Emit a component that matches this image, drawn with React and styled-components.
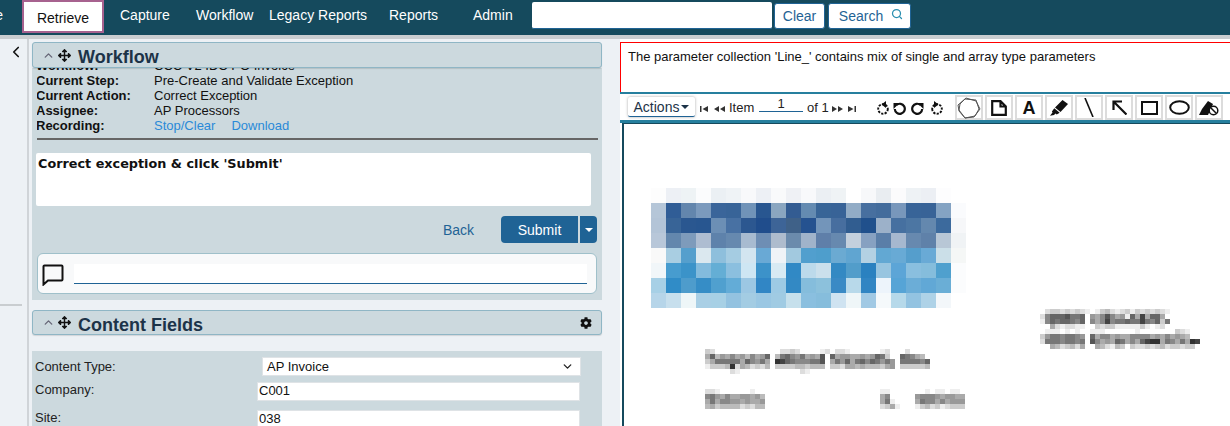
import React from "react";
import styled, { createGlobalStyle } from "styled-components";
import { FaArrowsAlt, FaCog } from "react-icons/fa";
import { Search as SearchIcon, ChevronLeft, ChevronUp, ChevronDown } from "lucide-react";

const GlobalStyle = createGlobalStyle`
  html, body { margin: 0; padding: 0; background: #fff; }
  body { font-family: "Liberation Sans", Arial, sans-serif; font-size: 13px; color: #111; }
  * { box-sizing: border-box; }
`;

const Page = styled.div`
  width: 1230px;
  height: 426px;
  overflow: hidden;
  display: flex;
  flex-direction: column;
`;

const Nav = styled.div`
  height: 35px;
  flex: none;
  background: #154a5d;
  display: flex;
  align-items: flex-start;
  overflow: hidden;
`;

const NavItem = styled.a`
  flex: none;
  width: ${(p) => p.$w}px;
  padding-top: 7px;
  color: #fff;
  font-size: 14px;
  line-height: 16px;
  white-space: nowrap;
`;

const NavClip = styled.div`
  width: 3px;
  overflow: hidden;
  flex: none;
  direction: rtl;
  padding-top: 7px;
  color: #fff;
  font-size: 14px;
  line-height: 16px;
`;

const ActiveTab = styled.a`
  flex: none;
  width: 82px;
  height: 33px;
  margin-left: 19px;
  margin-right: 16px;
  background: #fff;
  border: 2px solid #a7628f;
  color: #111;
  font-size: 14px;
  line-height: 16px;
  text-align: center;
  padding-top: 8px;
`;

const SearchInput = styled.div`
  width: 240px;
  height: 27px;
  margin: 2px 2px 0 20px;
  background: #fff;
  border-bottom: 1px solid #1f6395;
  border-radius: 2px;
  flex: none;
`;

const NavButton = styled.button`
  flex: none;
  width: ${(p) => p.$w}px;
  height: 26px;
  margin: 3px 3px 0 0;
  padding: 0;
  background: #fff;
  border: 1px solid #1f6395;
  border-radius: 3px;
  color: #1f6395;
  font: 14px "Liberation Sans", Arial, sans-serif;
  display: flex;
  align-items: center;
  justify-content: center;
  gap: 8px;
`;

const SearchGlyph = styled(SearchIcon)`
  margin-top: -4px;
  margin-right: -3px;
`;

const Strip = styled.div`
  height: 4px;
  flex: none;
  background: #c9cdd0;
`;

const Main = styled.div`
  flex: 1;
  display: flex;
  min-height: 0;
`;

const Sidebar = styled.div`
  width: 29px;
  flex: none;
  background: #edf1f5;
  border-right: 2px solid #d0d4d8;
  display: flex;
  flex-direction: column;
  color: #111;
`;

const Collapse = styled.div`
  height: 265px;
  flex: none;
  padding: 4px 0 0 7px;
`;

const SideRule = styled.div`
  width: 22px;
  height: 2px;
  background: #c9cdd0;
`;

const LeftPane = styled.div`
  width: 591px;
  flex: none;
  background: #edf1f5;
  padding: 3px 18px 0 3px;
  overflow: hidden;
`;

const PanelHeader = styled.div`
  position: relative;
  z-index: 1;
  height: ${(p) => p.$h}px;
  background: #ccd9de;
  border: 1px solid #8fb6c5;
  border-radius: 3px;
  box-shadow: 0 1px 1px rgba(0, 0, 0, 0.12);
  display: flex;
  align-items: center;
  padding: 0 9px;
  color: #1c3348;
`;

const HeaderTitle = styled.h2`
  margin: ${(p) => p.$mt}px 0 0 7px;
  font-size: 18px;
  line-height: 22px;
  font-weight: bold;
  flex: 1;
`;

const Move = styled(FaArrowsAlt)`
  margin-left: 3px;
  color: #111;
`;

const PanelBody = styled.div`
  background: #ccd9de;
  height: ${(p) => p.$h}px;
  margin-top: ${(p) => p.$mt || 0}px;
  padding: ${(p) => p.$pad};
  overflow: hidden;
`;

const Info = styled.div`
  height: 72px;
  overflow: hidden;
  border-bottom: 2px solid #666;
  margin: 0 4px 0 5px;
`;

const InfoRows = styled.div`
  margin-top: -10px;
`;

const InfoRow = styled.div`
  display: grid;
  grid-template-columns: 117px 1fr;
  height: 15px;
  line-height: 15px;
  font-size: 13px;
  color: #111;
`;

const InfoLabel = styled.span`
  font-weight: bold;
  margin-left: -1px;
`;

const RecLink = styled.a`
  color: #2a8ad8;
  margin-right: 16px;
`;

const Instruction = styled.div`
  height: 53px;
  margin: 13px 11px 0 4px;
  background: #fff;
  padding: 3px 2px;
  font: bold 12.800px/16px "DejaVu Sans", Verdana, sans-serif;
  color: #111;
  border-radius: 2px;
`;

const Actions = styled.div`
  display: flex;
  justify-content: flex-end;
  align-items: center;
  margin: 10px 5px 0 0;
  height: 27px;
`;

const BackLink = styled.a`
  color: #1f6395;
  font-size: 14px;
  margin-right: 27px;
  padding-top: 1px;
`;

const SubmitButton = styled.button`
  width: 77px;
  height: 27px;
  padding: 0;
  background: #1f6395;
  color: #fff;
  border: 0;
  border-radius: 4px 0 0 4px;
  font: 14px "Liberation Sans", Arial, sans-serif;
`;

const CaretButton = styled.button`
  width: 17px;
  height: 27px;
  margin-left: 2px;
  padding: 0;
  background: #1f6395;
  border: 0;
  border-radius: 0 4px 4px 0;
  display: flex;
  align-items: center;
  justify-content: center;
`;

const Caret = styled.i`
  width: 0;
  height: 0;
  border-left: 4px solid transparent;
  border-right: 4px solid transparent;
  border-top: 4px solid ${(p) => p.$c || "#fff"};
  margin-top: 1px;
`;

const CommentBox = styled.div`
  height: 41px;
  margin: 10px 5px 0 5px;
  background: #f8f9fa;
  border: 1px solid #9fc0ca;
  border-radius: 6px;
  padding: 10px 9px 0 4px;
  display: flex;
  gap: 10px;
  align-items: flex-start;
`;

const CommentInput = styled.div`
  flex: 1;
  height: 20px;
  background: #fff;
  border-bottom: 1px solid #1f6395;
`;

const Spacer = styled.div`
  height: 10px;
`;

const FormRow = styled.div`
  display: grid;
  grid-template-columns: ${(p) => p.$label}px ${(p) => p.$w}px;
  height: ${(p) => p.$h}px;
  font-size: 13px;
  color: #222;
`;

const FormLabel = styled.label`
  line-height: 16px;
  padding-top: ${(p) => p.$pt || 0}px;
`;

const FieldInput = styled.div`
  height: 19px;
  background: #fff;
  border: 1px solid #dfe3e6;
  line-height: 16px;
  padding-left: 1px;
  color: #111;
`;

const SelectBox = styled(FieldInput)`
  padding: 0 6px 0 4px;
  line-height: 17px;
  display: flex;
  align-items: center;
  justify-content: space-between;
`;

const RightPane = styled.div`
  flex: 1;
  min-width: 0;
  display: flex;
  flex-direction: column;
  background: #fff;
  padding-top: 3px;
`;

const Message = styled.div`
  height: 50px;
  flex: none;
  border: 1px solid #f00;
  border-right: 0;
  border-bottom: 0;
  padding: 6px 7px;
  font-size: 13px;
  line-height: 16px;
  color: #111;
`;

const Toolbar = styled.div`
  height: 31px;
  flex: none;
  display: flex;
  align-items: flex-start;
  border-top: 2px solid #267f9e;
  border-bottom: 3px solid #267f9e;
  padding-left: 8px;
  font-size: 13px;
  color: #222;
`;

const ActionsMenu = styled.button`
  flex: none;
  width: 67px;
  height: 20px;
  padding: 0;
  margin: 3px 5px 0 0;
  background: #fff;
  border: 0;
  border-bottom: 1px solid #1f6395;
  box-shadow: 0 0 3px rgba(0, 0, 0, 0.35);
  border-radius: 2px;
  font: 14px "Liberation Sans", Arial, sans-serif;
  color: #1c3348;
  display: flex;
  align-items: center;
  justify-content: center;
  gap: 2px;
`;

const Pager = styled.svg`
  flex: none;
  margin: 12px ${(p) => p.$mr}px 0 0;
  fill: #333;
`;

const PagerText = styled.span`
  flex: none;
  width: ${(p) => p.$w}px;
  margin-top: 6px;
  line-height: 16px;
`;

const PageInput = styled.span`
  flex: none;
  width: 44px;
  height: 16px;
  margin: 2px 4px 0 0;
  text-align: center;
  border-bottom: 1px solid #1f6395;
  line-height: 15px;
`;

const RotateGroup = styled.div`
  flex: none;
  display: flex;
  gap: 3px;
  margin: 7px 11px 0 20px;
`;

const RotateSlot = styled.span`
  width: 14px;
  height: 14px;
  margin-left: ${(p) => p.$ml || 0}px;
  display: block;
  transform: ${(p) => (p.$flip ? "scaleX(-1)" : "none")};
`;

const ToolButton = styled.div`
  width: 28px;
  height: 25px;
  flex: none;
  margin: 1px 2px 0 0;
  border: 2px solid #dcdcdc;
  display: flex;
  align-items: center;
  justify-content: center;
  color: #111;
`;

const ToolLetter = styled.span`
  font-size: 18px;
  line-height: 20px;
  font-weight: bold;
`;

const Viewer = styled.div`
  flex: 1;
  min-height: 0;
  margin: 0 0 0 2px;
  border-left: 2px solid #154a5d;
  border-top: 1px solid #154a5d;
  overflow: hidden;
`;

const DocScan = styled.svg`
  display: block;
`;

// blurred logo from the scan, one row per string
const LOGO = [
  "fdfdfd edf0f5 eef3f5 fbfcfd ebf0f4 eff3f6 f8f9fb edf0f5 f9fafb eff1f5 f8f9fb ebeff3 eff3f5 ffffff f7f8fa e9edf1 fbfbfc eef2f5 ecEff4 fdfdfe ffffff",
  "b5c6d8 305d96 6386ad 7b9abd 3a659a 386498 7093b8 285690 8aa6c0 335c92 648bb1 386597 386397 92acc6 476f9f 436c9c 7897bb 386498 386397 84a3c3 fafbfd",
  "b3c4d7 386497 2a5790 285690 6c8fb5 4871a3 2c5790 204d8c 3d6497 3f6188 255290 7395ba 476e9f 315d90 20508c 9cb1c9 4670a0 4c76a3 6488ae 3c6a9d f6f7f9",
  "b8c7d9 6387ad 7e9bbb aebdd1 5e82ab 6689af a8bbd0 6e8eb4 aebccd 6b8bac a0b3ca 5f7fa9 6789af c4d0dd 87a1c1 5a7ea8 a6b8cf 6789af 5f81a9 b8c7d6 f0f3f5",
  "f9f9f9 a9cee2 559fcd dbe8ef 8ebfdc a5cce2 d3e5f0 69a9d5 eff3f7 a2c9df 519fce 4e9ecc 6baad2 60a5d1 b3d1e3 62a8d3 68aad5 559ecc 69aad6 cbdfe8 f5f7f6",
  "f1f6f9 479ccf 3b93c9 83bbdd 64aed5 8bbfdf cee6f3 3c92c9 d8eaf3 3189c5 bcdaeb cbe0ec 3389c3 529dca 2a81c0 98c5e0 5ca5d7 8abfdf 85bddc 4fa0ce fbfcfd",
  "a7d0e6 308cc7 4e9ccc 368dc6 50a0cf 63acd7 9cc7e3 3186c5 9dcae4 3389c4 85bddc 8cc1dc 3a8ac5 b8d9ea 3185c3 edf4fb 56a4d6 6badd7 61a8d6 6aaed6 fbfcfd",
  "b6d5e9 c7dfed eef6f8 a9cfe5 a7d0e5 93c2e0 a3cce3 9ac7e3 a0cbe3 c6e0ec 8abfdf 86bddc cfe3f1 eff6f8 a1c9e4 f5f9fb b6d9ea 93c3e1 aed2e7 f3f7fa ffffff",
];

// blurred address lines, hex digit = grey level
const PHONE = [
  "fdccdcdcdefecbdedcecdcdcdeffffff",
  "d86665776f9a858a9e6a4a66afffffff",
  "e86766786f8a848776774786c7ffffff",
  "ffadeddeeffcdcceeeeecefedfffffff",
  "feeefefeffeeeffffffefffffffcdefff",
  "c97787789f6a88a9aa8888a9a8a9abff",
  "d77787787f58a9a67a8a6433a78a7a34",
  "ffabdcbdaffabdebcfcddcdcbdccdccf",
];

const COMPANY = [
  "cdfffffffffffffddcdffffedfddeffffffedfffdfffff",
  "a6b9a8a9b8a96fb76897a9a5f6a99aa9a967cff678abf",
  "ca77777a6897af3467888775fa796a76867979f777786",
  "ecccb3dabdcdbfccccbbcbbbfccdaababbbca9fcccccb",
  "fffffdeffffffffffffdefffffffffffffffffffffffff",
];

const CITY = ["ddeffffffeff", "879a8aa99a9b", "a7a8899a9aa9", "bacbbbbdcdbb"];

const STATE = ["eeff", "a8ff", "a7ef", "dcae"];

const ZIP = ["ffefeefeef", "98889a99aa", "a788a8a999", "ecbdcedccc"];

const Mosaic = ({ x, y, cell, rows }) => (
  <g transform={`translate(${x} ${y})`}>
    {rows.map((row, r) =>
      row.split(" ").map((color, c) => (
        <rect key={`${r}-${c}`} x={c * cell} y={r * cell} width={cell} height={cell} fill={`#${color}`} />
      ))
    )}
  </g>
);

const BlurLine = ({ x, y, rows }) => (
  <g transform={`translate(${x} ${y})`}>
    {rows.map((row, r) =>
      row.split("").map((d, c) => {
        const v = d + d;
        return <rect key={`${r}-${c}`} x={c * 5} y={r * 5} width={5} height={5} fill={`#${v}${v}${v}`} />;
      })
    )}
  </g>
);

const SkipEnd = ({ flip }) => (
  <Pager width="8" height="6" viewBox="0 0 8 6" $mr={flip ? 0 : 6} style={flip ? { transform: "scaleX(-1)" } : undefined}>
    <path d="M0 0h1.500v6H0zM8 0v6L2.500 3z" />
  </Pager>
);

const SkipStep = ({ flip }) => (
  <Pager width="11" height="6" viewBox="0 0 11 6" $mr={flip ? 5 : 4} style={flip ? { transform: "scaleX(-1)" } : undefined}>
    <path d="M5 0v6L0 3zM11 0v6L6 3z" />
  </Pager>
);

const RotateSolid = () => (
  <svg width="14" height="14" viewBox="0 0 14 14" fill="none" stroke="#111" strokeWidth="2.200">
    <path d="M3.500 4a5 5 0 1 1-1.700 4" />
    <path d="M.5 2h6L.5 8z" fill="#111" stroke="none" />
  </svg>
);

const RotateDashed = () => (
  <svg width="14" height="14" viewBox="0 0 14 14" fill="none" stroke="#111" strokeWidth="1.900">
    <circle cx="7" cy="8" r="4.800" strokeDasharray="2.200 1.300" />
    <path d="M10 0v7L5.500 3.500z" fill="#111" stroke="none" />
  </svg>
);

const tools = [
  <svg width="24" height="22" viewBox="0 0 24 22" fill="none" stroke="#555" strokeWidth="1" key="poly">
    <path d="M9 1l10 3 4 8-6 8-9 1-6-7-1-6z" />
    <path d="M8 2l11 1 3 9-4 7-10 2-6-8 1-6z" />
  </svg>,
  <svg width="16" height="16" viewBox="0 0 16 16" fill="none" stroke="#111" strokeWidth="2.200" key="note">
    <path d="M1.200 1.200h8.300l5.300 5.300v8.300H1.200zM9.500 1.200v5.300h5.300" />
  </svg>,
  <ToolLetter key="text">A</ToolLetter>,
  <svg width="18" height="16" viewBox="0 0 18 16" fill="#111" key="marker">
    <path d="M12.500 0 18 4l-7.500 8L5 7.500zM4.300 8.300l5.400 4.400-3 1.800-1.200-1-1.500 1.500L0 15.800l2.500-3.300-.6-1.100z" />
  </svg>,
  <svg width="10" height="19" viewBox="0 0 10 19" stroke="#111" strokeWidth="1.600" key="line">
    <path d="M1 0l8 19" />
  </svg>,
  <svg width="15" height="15" viewBox="0 0 15 15" fill="none" stroke="#111" strokeWidth="2.200" key="arrow">
    <path d="M2 2l12.500 12.500M1.500 10V1.500H10" />
  </svg>,
  <svg width="17" height="14" viewBox="0 0 17 14" fill="none" stroke="#111" strokeWidth="2" key="rect">
    <rect x="1" y="1" width="15" height="12" />
  </svg>,
  <svg width="21" height="15" viewBox="0 0 21 15" fill="none" stroke="#111" strokeWidth="2" key="ellipse">
    <ellipse cx="10.500" cy="7.500" rx="9.300" ry="6.300" />
  </svg>,
  <svg width="20" height="16" viewBox="0 0 20 16" key="erase">
    <path d="M9 1l5 3-5 11H0l3-6z" fill="#111" />
    <circle cx="14.500" cy="10.500" r="4.300" fill="#fff" stroke="#111" strokeWidth="1.500" />
    <path d="M11.500 7.500l6 6" stroke="#111" strokeWidth="1.500" />
  </svg>,
];

const Bubble = () => (
  <svg width="22" height="22" viewBox="0 0 22 22" fill="none" stroke="#111" strokeWidth="2">
    <path d="M1.500 2.500a1 1 0 0 1 1-1h17a1 1 0 0 1 1 1v13a1 1 0 0 1-1 1H6l-4.500 4z" />
  </svg>
);

const infoRows = [
  ["Workflow:", "CCC V2 IDC PO Invoice"],
  ["Current Step:", "Pre-Create and Validate Exception"],
  ["Current Action:", "Correct Exception"],
  ["Assignee:", "AP Processors"],
];

export default function App() {
  return (
    <Page>
      <GlobalStyle />
      <Nav>
        <NavClip>Home</NavClip>
        <ActiveTab>Retrieve</ActiveTab>
        <NavItem $w={76}>Capture</NavItem>
        <NavItem $w={73}>Workflow</NavItem>
        <NavItem $w={120}>Legacy Reports</NavItem>
        <NavItem $w={84}>Reports</NavItem>
        <NavItem $w={39}>Admin</NavItem>
        <SearchInput />
        <NavButton $w={51}>Clear</NavButton>
        <NavButton $w={83}>
          Search
          <SearchGlyph size={12} color="#2a8fb0" strokeWidth={2.500} />
        </NavButton>
      </Nav>
      <Strip />
      <Main>
        <Sidebar>
          <Collapse>
            <ChevronLeft size={18} strokeWidth={2.200} />
          </Collapse>
          <SideRule />
        </Sidebar>
        <LeftPane>
          <PanelHeader $h={26}>
            <ChevronUp size={13} color="#667" strokeWidth={2.500} />
            <Move size={13} />
            <HeaderTitle $mt={3}>Workflow</HeaderTitle>
          </PanelHeader>
          <PanelBody $h={232} $pad="0">
            <Info>
              <InfoRows>
                {infoRows.map(([label, value]) => (
                  <InfoRow key={label}>
                    <InfoLabel>{label}</InfoLabel>
                    <span>{value}</span>
                  </InfoRow>
                ))}
                <InfoRow>
                  <InfoLabel>Recording:</InfoLabel>
                  <span>
                    <RecLink>Stop/Clear</RecLink>
                    <RecLink>Download</RecLink>
                  </span>
                </InfoRow>
              </InfoRows>
            </Info>
            <Instruction>Correct exception &amp; click 'Submit'</Instruction>
            <Actions>
              <BackLink>Back</BackLink>
              <SubmitButton>Submit</SubmitButton>
              <CaretButton>
                <Caret />
              </CaretButton>
            </Actions>
            <CommentBox>
              <Bubble />
              <CommentInput />
            </CommentBox>
          </PanelBody>
          <Spacer />
          <PanelHeader $h={25}>
            <ChevronUp size={13} color="#667" strokeWidth={2.500} />
            <Move size={13} />
            <HeaderTitle $mt={5}>Content Fields</HeaderTitle>
            <FaCog size={12} color="#111" />
          </PanelHeader>
          <PanelBody $h={80} $mt={16} $pad="6px 0 0 3px">
            <FormRow $label={227} $w={319} $h={25}>
              <FormLabel $pt={2}>Content Type:</FormLabel>
              <SelectBox>
                AP Invoice
                <ChevronDown size={13} color="#222" strokeWidth={2.500} />
              </SelectBox>
            </FormRow>
            <FormRow $label={222} $w={323} $h={28}>
              <FormLabel>Company:</FormLabel>
              <FieldInput>C001</FieldInput>
            </FormRow>
            <FormRow $label={222} $w={323} $h={20}>
              <FormLabel>Site:</FormLabel>
              <FieldInput>038</FieldInput>
            </FormRow>
          </PanelBody>
        </LeftPane>
        <RightPane>
          <Message>The parameter collection 'Line_' contains mix of single and array type parameters</Message>
          <Toolbar>
            <ActionsMenu>
              Actions
              <Caret $c="#1c3348" />
            </ActionsMenu>
            <SkipEnd />
            <SkipStep />
            <PagerText $w={30}>Item</PagerText>
            <PageInput>1</PageInput>
            <PagerText $w={25}>of 1</PagerText>
            <SkipStep flip />
            <SkipEnd flip />
            <RotateGroup>
              <RotateSlot>
                <RotateDashed />
              </RotateSlot>
              <RotateSlot>
                <RotateSolid />
              </RotateSlot>
              <RotateSlot $flip>
                <RotateSolid />
              </RotateSlot>
              <RotateSlot $flip $ml={3}>
                <RotateDashed />
              </RotateSlot>
            </RotateGroup>
            {tools.map((icon) => (
              <ToolButton key={icon.key}>{icon}</ToolButton>
            ))}
          </Toolbar>
          <Viewer>
            <DocScan width="606" height="304" viewBox="624 124 606 304">
              <rect x="624" y="124" width="606" height="304" fill="#fff" />
              <Mosaic x={651} y={188} cell={15} rows={LOGO} />
              <BlurLine x={1040} y={309} rows={PHONE} />
              <BlurLine x={705} y={349} rows={COMPANY} />
              <BlurLine x={705} y={389} rows={CITY} />
              <BlurLine x={880} y={389} rows={STATE} />
              <BlurLine x={915} y={389} rows={ZIP} />
            </DocScan>
          </Viewer>
        </RightPane>
      </Main>
    </Page>
  );
}
